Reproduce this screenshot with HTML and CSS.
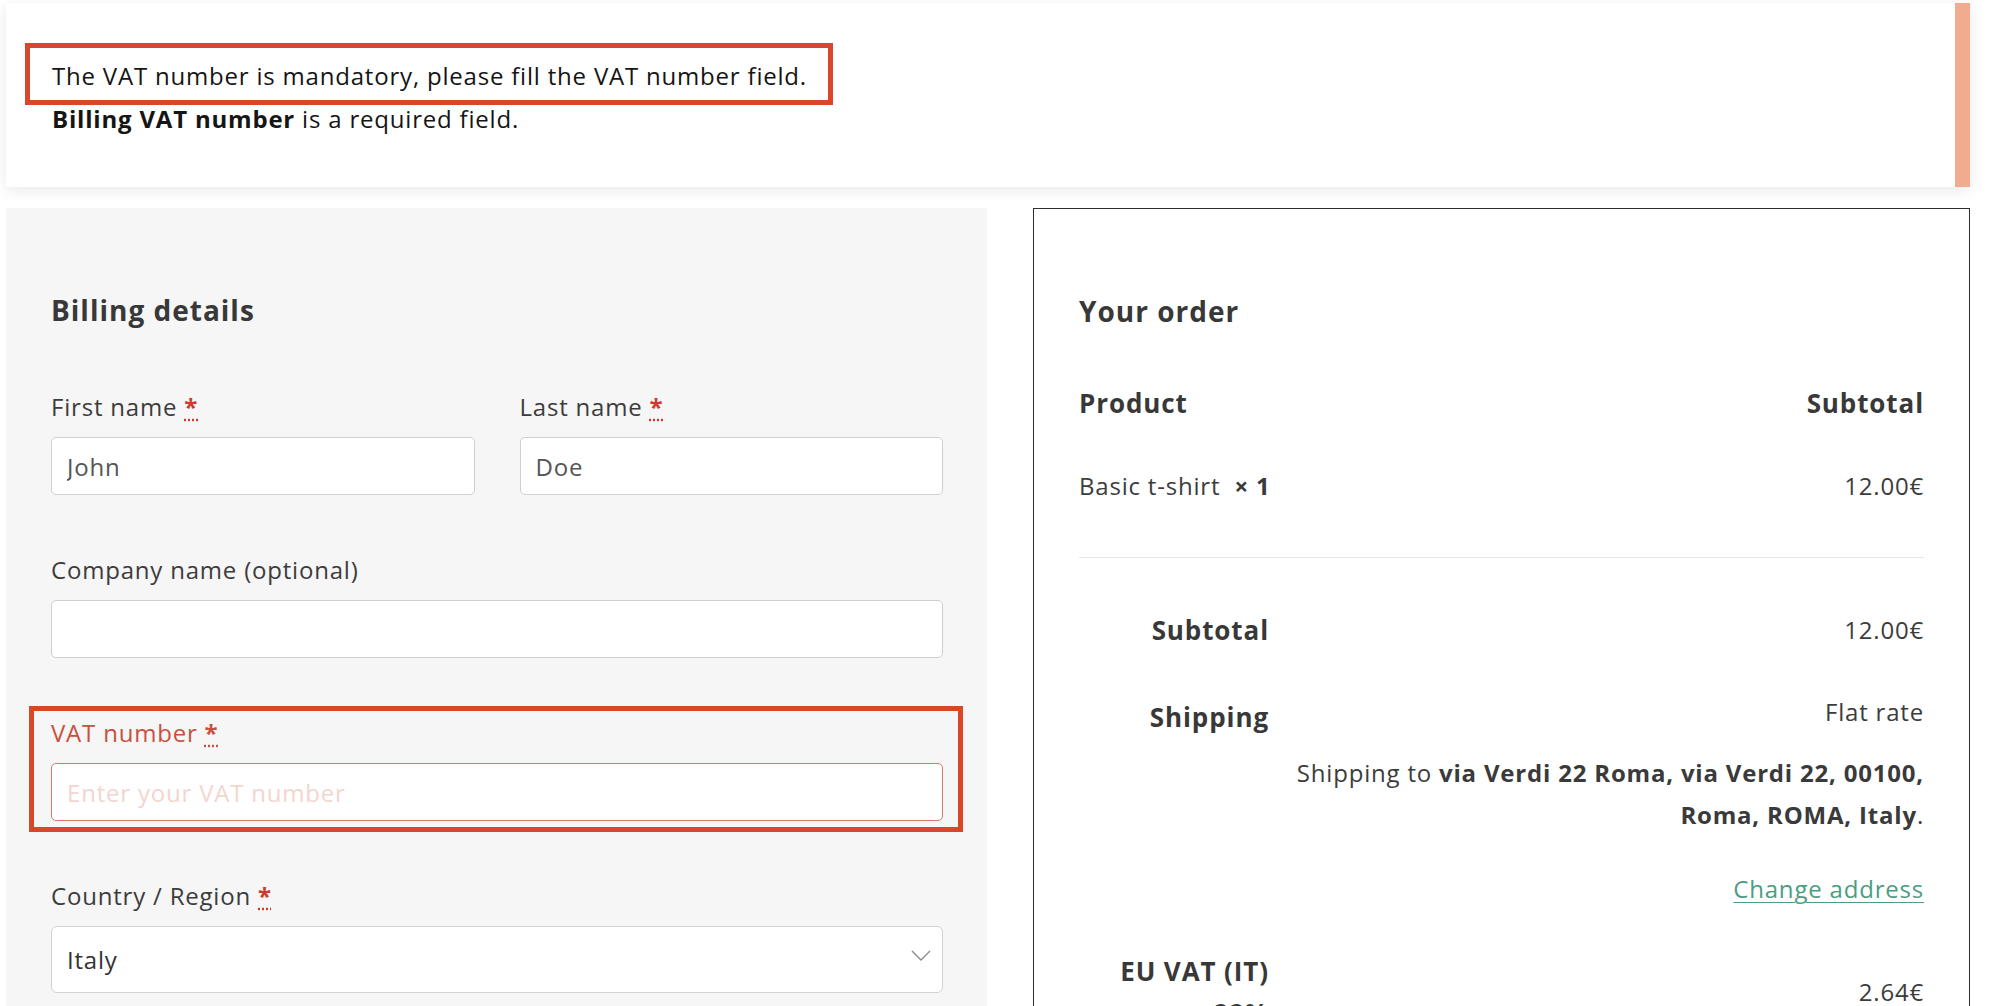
FILE: index.html
```html
<!DOCTYPE html>
<html lang="en">
<head>
<meta charset="utf-8">
<title>Checkout</title>
<link rel="stylesheet" href="styles.css">
</head>
<body>
<div class="page">
  <div class="notice">
    <div class="msg msg-marked">The VAT number is mandatory, please fill the VAT number field.</div>
    <div class="msg"><strong>Billing VAT number</strong> is a required field.</div>
  </div>

  <div class="checkout">
    <section class="billing">
      <h3 class="section-title">Billing details</h3>

      <div class="row-2">
        <div class="field">
          <label class="field-label">First name <abbr class="required" title="required">*</abbr></label>
          <input class="text-input" type="text" value="John">
        </div>
        <div class="field">
          <label class="field-label">Last name <abbr class="required" title="required">*</abbr></label>
          <input class="text-input" type="text" value="Doe">
        </div>
      </div>

      <div class="field">
        <label class="field-label">Company name (optional)</label>
        <input class="text-input" type="text" value="">
      </div>

      <div class="field field-error field-marked">
        <label class="field-label">VAT number <abbr class="required" title="required">*</abbr></label>
        <input class="text-input" type="text" placeholder="Enter your VAT number">
      </div>

      <div class="field">
        <label class="field-label">Country / Region <abbr class="required" title="required">*</abbr></label>
        <div class="select">
          <span class="select-value">Italy</span>
          <svg class="chevron" width="20" height="12" viewBox="0 0 20 12"><path d="M1 1 L10 10 L19 1" fill="none" stroke="#8a8a8a" stroke-width="1.4"/></svg>
        </div>
      </div>
    </section>

    <section class="order">
      <h3 class="section-title">Your order</h3>

      <div class="order-head">
        <span>Product</span>
        <span>Subtotal</span>
      </div>

      <div class="order-item">
        <span>Basic t-shirt&nbsp; <strong class="qty">&times;&nbsp;1</strong></span>
        <span>12.00€</span>
      </div>

      <div class="totals">
        <div class="total-row row-subtotal">
          <div class="total-th">Subtotal</div>
          <div class="total-td">12.00€</div>
        </div>
        <div class="total-row row-shipping">
          <div class="total-th th-shipping">Shipping</div>
          <div class="total-td">
            <div>Flat rate</div>
            <p class="ship-dest">Shipping to <strong>via Verdi 22 Roma, via Verdi 22, 00100,<br>Roma, ROMA, Italy</strong>.</p>
            <a class="change-link" href="#">Change address</a>
          </div>
        </div>
        <div class="total-row row-tax">
          <div class="total-th">EU VAT (IT)<br>22%</div>
          <div class="total-td td-middle">2.64€</div>
        </div>
      </div>
    </section>
  </div>
</div>
</body>
</html>
```
FILE: styles.css
```css
* { box-sizing: border-box; }

html, body {
  margin: 0;
  padding: 0;
  background: #ffffff;
}

body {
  font-family: "Open Sans", "Liberation Sans", sans-serif;
  font-size: 24px;
  line-height: 42px;
  letter-spacing: 0.8px;
  color: #3c3c3c;
  overflow: hidden;
  height: 1006px;
}

.page {
  padding: 3px 42px 0 6px;
}

/* ---------- notice ---------- */
.notice {
  background: #ffffff;
  border-right: 15px solid #f1ab8f;
  padding: 40px 46px 47px 46px;
  color: #151515;
  box-shadow: 0 3px 14px rgba(0, 0, 0, 0.09);
}

.msg strong { font-weight: 700; }

.msg-marked {
  width: fit-content;
  border: 5px solid #d9472b;
  padding: 7px 21px 3px 22px;
  margin: 0 0 -7px -27px;
}

/* ---------- layout ---------- */
.checkout {
  display: grid;
  grid-template-columns: 981px 937px;
  column-gap: 46px;
  margin-top: 21px;
  align-items: start;
}

.section-title {
  margin: 0;
  font-size: 28px;
  line-height: 42px;
  font-weight: 700;
  color: #383838;
  letter-spacing: 1px;
}

/* ---------- billing ---------- */
.billing {
  background: #f6f6f6;
  padding: 81px 44px 80px 45px;
  min-height: 900px;
}

.billing .section-title { margin-bottom: 55px; }

.row-2 {
  display: flex;
  gap: 45px;
}

.row-2 .field { flex: 1; }

.field { margin-bottom: 54px; }

.field-label {
  display: block;
  margin-bottom: 9px;
  color: #3c3c3c;
}

.required {
  color: #d2382c;
  font-weight: 700;
  text-decoration: underline dotted;
  text-underline-offset: 3px;
  cursor: help;
}

.text-input {
  display: block;
  width: 100%;
  height: 58px;
  border: 1px solid #cfcfcf;
  border-radius: 5px;
  background: #ffffff;
  padding: 0 15px;
  font-family: inherit;
  font-size: 24px;
  letter-spacing: 0.8px;
  color: #555555;
  outline: none;
}

.field-error .field-label { color: #c9503d; }
.field-error .field-label .required { color: #c9503d; }
.field-error .text-input { border-color: #d77a6a; }
.field-error .text-input::placeholder { color: #f3d5cf; opacity: 1; }

.field-marked {
  border: 5px solid #d9472b;
  padding: 1px 15px 6px 17px;
  margin: -6px -20px 43px -22px;
}

.select {
  display: flex;
  align-items: center;
  justify-content: space-between;
  height: 67px;
  border: 1px solid #d2d2d2;
  border-radius: 6px;
  background: #ffffff;
  padding: 0 11px 0 15px;
  color: #333333;
}

.chevron { margin-top: -8px; }

/* ---------- order ---------- */
.order {
  border: 1px solid #2f2f2f;
  background: #ffffff;
  padding: 81px 45px 40px 45px;
  min-height: 900px;
}

.order .section-title { margin-bottom: 50px; }

.order-head {
  display: flex;
  justify-content: space-between;
  font-size: 26px;
  font-weight: 700;
  color: #383838;
  letter-spacing: 0.9px;
  margin-bottom: 41px;
}

.order-item {
  display: flex;
  justify-content: space-between;
  padding-bottom: 50px;
  border-bottom: 1px solid #e6e6e6;
}

.qty { font-weight: 700; color: #3a3a3a; }

.totals { padding-top: 31px; }

.total-row {
  display: grid;
  grid-template-columns: 190px 1fr;
  padding: 20px 0;
}

.total-th {
  text-align: right;
  font-size: 26px;
  font-weight: 700;
  color: #383838;
  letter-spacing: 0.9px;
}

.th-shipping { margin-top: 5px; }

.total-td { text-align: right; }

.td-middle { align-self: center; }

.ship-dest {
  margin: 19px 0 0 0;
}

.ship-dest strong { font-weight: 700; color: #3a3a3a; }

.change-link {
  display: inline-block;
  margin-top: 32px;
  color: #4b9d82;
  text-decoration: underline;
  text-underline-offset: 4px;
  text-decoration-thickness: 1px;
}
```
